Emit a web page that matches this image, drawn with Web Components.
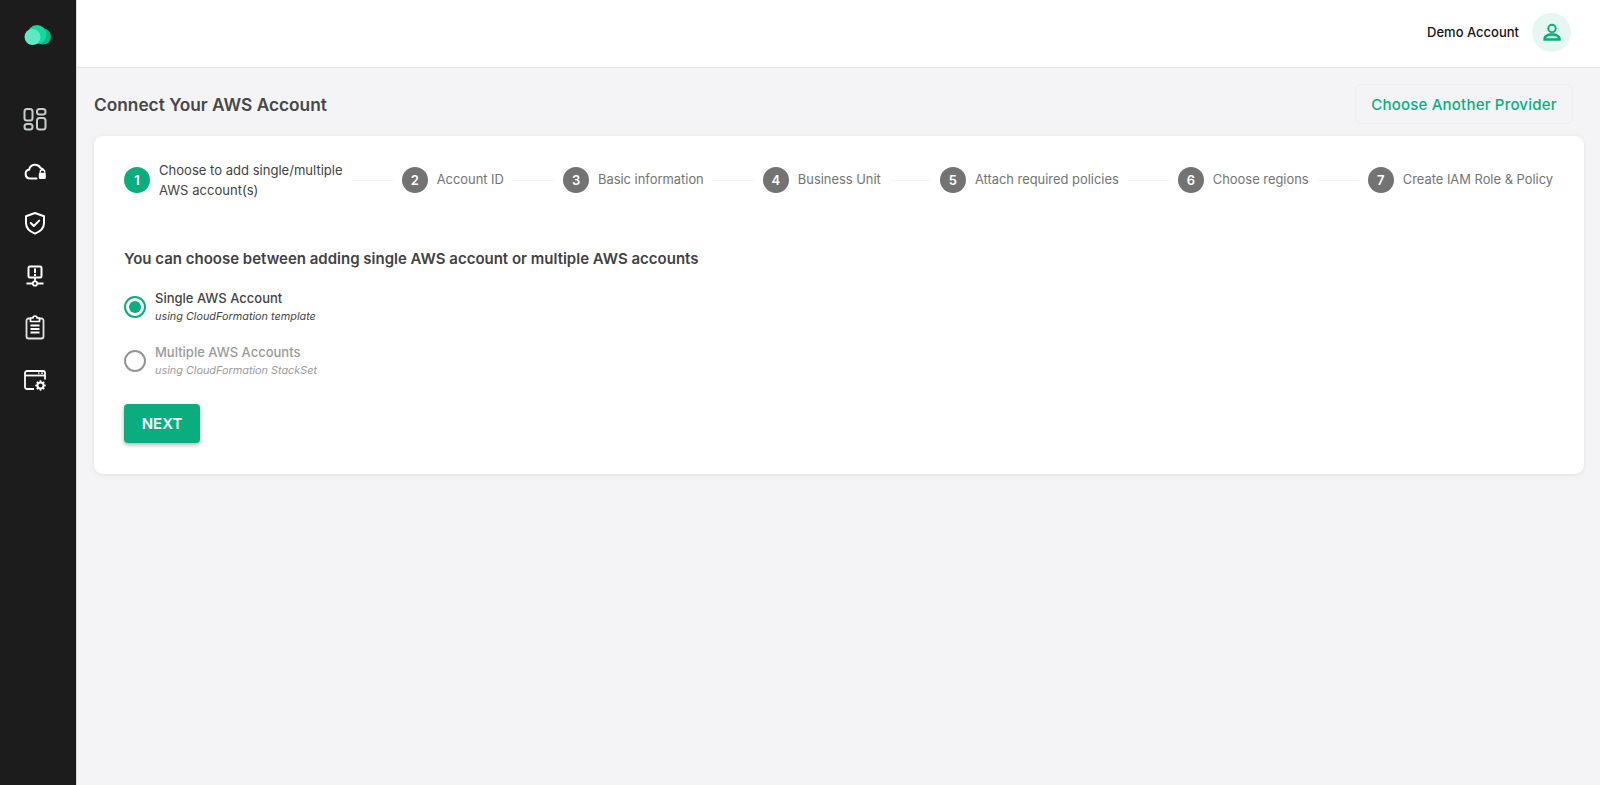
<!DOCTYPE html>
<html>
<head>
<meta charset="utf-8">
<title>Connect AWS Account</title>
<style>
    html, body { margin: 0; height: 100%; }
    body { font-family: Inter, "Liberation Sans", sans-serif; background: #f4f4f6; }
</style>
</head>
<body>
<app-shell>
    <side-nav slot="side"></side-nav>
    <top-bar slot="top" name="Demo Account"></top-bar>
    <page-head title="Connect Your AWS Account" action="Choose Another Provider"></page-head>
    <wizard-card>
        <wizard-steps>
            <wizard-step num="1" active>Choose to add single/multiple<br>AWS account(s)</wizard-step>
            <wizard-step num="2">Account ID</wizard-step>
            <wizard-step num="3">Basic information</wizard-step>
            <wizard-step num="4">Business Unit</wizard-step>
            <wizard-step num="5">Attach required policies</wizard-step>
            <wizard-step num="6">Choose regions</wizard-step>
            <wizard-step num="7">Create IAM Role &amp; Policy</wizard-step>
        </wizard-steps>
        <h3 class="q" slot="question">You can choose between adding single AWS account or multiple AWS accounts</h3>
        <radio-option slot="options" checked label="Single AWS Account" hint="using CloudFormation template"></radio-option>
        <radio-option slot="options" label="Multiple AWS Accounts" hint="using CloudFormation StackSet"></radio-option>
        <next-button slot="actions">NEXT</next-button>
    </wizard-card>
</app-shell>

<script>
'use strict';

function define(name, html) {
    const template = document.createElement('template');
    template.innerHTML = html;
    customElements.define(name, class extends HTMLElement {
        constructor() {
            super();
            this.attachShadow({ mode: 'open' });
            this.shadowRoot.appendChild(template.content.cloneNode(true));
        }
        connectedCallback() {
            this.shadowRoot.querySelectorAll('[data-attr]').forEach(el => {
                el.textContent = this.getAttribute(el.dataset.attr);
            });
        }
    });
}

define('app-shell', `
    <style>
        :host { display: flex; min-height: 785px; height: 100vh; }
        .main { flex: 1; min-width: 0; display: flex; flex-direction: column; }
        .content { padding: 16px 16px 0 17px; }
    </style>
    <slot name="side"></slot>
    <div class="main">
        <slot name="top"></slot>
        <div class="content"><slot></slot></div>
    </div>
`);

define('side-nav', `
    <style>
        :host { display: flex; flex-direction: column; width: 77px; flex: none; background: #1c1c1c; border-right: 1px solid #d8d8d8; box-sizing: border-box; padding: 23px 0 0 23px; }
        .logo { display: block; }
        nav { display: flex; flex-direction: column; gap: 28px; margin-top: 60px; }
        nav svg { display: block; width: 24px; height: 24px; overflow: visible; }
    </style>
    <svg class="logo" width="30" height="24" viewBox="0 0 30 24">
        <circle cx="20" cy="13.500" r="8" fill="#08b986"/>
        <circle cx="14" cy="11.500" r="9.500" fill="#12d99f"/>
        <circle cx="9.500" cy="14" r="8" fill="#5fe8c4"/>
    </svg>
    <nav>
        <!-- dashboard tiles -->
        <svg viewBox="0 0 24 24"><g fill="none" stroke="#c5cdc9" stroke-width="2"><rect x="1.500" y="2" width="8" height="11.500" rx="2.500"/><rect x="14" y="2" width="8.500" height="5.500" rx="2.500"/><rect x="1.500" y="17" width="8" height="5.500" rx="2.500"/><rect x="14" y="11" width="8.500" height="11.500" rx="2.500"/></g></svg>
        <!-- cloud with lock -->
        <svg viewBox="0 0 24 24"><path d="M13.500 19.500H7a4.500 4.500 0 0 1-.8-8.900 6 6 0 0 1 11.200-1.700 5 5 0 0 1 2.600 1.600" fill="none" stroke="#fff" stroke-width="2" stroke-linecap="round"/><path d="M17.200 13.800v-.8a2.300 2.300 0 0 1 4.600 0v.8" fill="none" stroke="#fff" stroke-width="1.400"/><rect x="15.800" y="13.800" width="7" height="6.200" rx="1.200" fill="#fff"/></svg>
        <!-- shield with check -->
        <svg viewBox="0 0 24 24"><path d="M12 2 21 5.200V12c0 5.200-3.800 8.600-9 10.600C6.800 20.600 3 17.200 3 12V5.200z" fill="none" stroke="#fff" stroke-width="2" stroke-linejoin="round"/><path d="m7.800 12 3 3 5.400-5.400" fill="none" stroke="#fff" stroke-width="2" stroke-linecap="round" stroke-linejoin="round"/></svg>
        <!-- monitor on a network line -->
        <svg viewBox="0 0 24 24"><rect x="5.500" y="3.500" width="13" height="11" rx="1.500" fill="none" stroke="#fff" stroke-width="2"/><path d="M12 5.500v4.500M12 11v2" stroke="#fff" stroke-width="2"/><path d="M12 14.500v4M3.500 20.500h6M14.500 20.500h6" stroke="#fff" stroke-width="1.800"/><circle cx="12" cy="20.500" r="2.200" fill="none" stroke="#fff" stroke-width="1.800"/></svg>
        <!-- clipboard -->
        <svg viewBox="0 0 24 24"><path d="M8 3.500H5.500A2 2 0 0 0 3.500 5.500v16a2 2 0 0 0 2 2h13a2 2 0 0 0 2-2v-16a2 2 0 0 0-2-2H16" fill="none" stroke="#e4e4e4" stroke-width="1.800"/><path d="M7.500 6.500V3H10a2 2 0 0 1 4 0h2.500v3.500z" fill="none" stroke="#fff" stroke-width="1.700" stroke-linejoin="round"/><path d="M7.500 10.500h9M7.500 14h9M7.500 17.500h9" stroke="#fff" stroke-width="1.800"/></svg>
        <!-- window with gear -->
        <svg viewBox="0 0 24 24"><path d="M11 22H4a2 2 0 0 1-2-2V6a2 2 0 0 1 2-2h16a2 2 0 0 1 2 2v6.500" fill="none" stroke="#fff" stroke-width="1.800"/><path d="M2 8.500h20" stroke="#fff" stroke-width="1.800"/><path d="M15 6.200h1.500M18 6.200h2" stroke="#fff" stroke-width="1.300"/><circle cx="17.500" cy="18.500" r="3.100" fill="none" stroke="#fff" stroke-width="2"/><path d="M17.500 13.200v2M17.500 21.800v2M12.200 18.500h2M20.800 18.500h2M13.800 14.800l1.400 1.400M19.800 20.800l1.400 1.400M13.800 22.200l1.400-1.400M19.800 16.200l1.400-1.400" stroke="#fff" stroke-width="1.700"/></svg>
    </nav>
`);

define('top-bar', `
    <style>
        :host { display: flex; align-items: center; justify-content: flex-end; gap: 13px; height: 68px; padding-right: 29px; background: #fff; border-bottom: 1px solid #e2e3e5; box-sizing: border-box; font-size: 13px; font-weight: 500; color: #151515; flex: none; }
        .avatar { width: 39px; height: 39px; border-radius: 50%; background: #e6f7f1; display: flex; align-items: center; justify-content: center; margin-top: -3px; }
        span { margin-top: -3px; }
    </style>
    <span data-attr="name"></span>
    <div class="avatar">
        <svg width="22" height="22" viewBox="0 0 22 22"><circle cx="11" cy="7.500" r="3.700" fill="none" stroke="#0aae7e" stroke-width="2"/><path d="M2.300 19.700v-1.700c0-3.700 4-5.700 8.700-5.700s8.700 2 8.700 5.700v1.700z" fill="#0aae7e"/><path d="M5 17.200c.8-1.700 3.200-2.400 6-2.400s5.200.7 6 2.400z" fill="#bfeadb"/></svg>
    </div>
`);

define('page-head', `
    <style>
        :host { display: flex; align-items: center; justify-content: space-between; margin-bottom: 12px; color: #444; }
        h1 { margin: 0; font-size: 17.300px; font-weight: 600; color: #474747; }
        button { font: 500 15px Inter, "Liberation Sans", sans-serif; letter-spacing: .2px; color: #0aae7e; background: transparent; border: 1px solid #eeeef0; border-radius: 6px; height: 40px; width: 218px; padding: 0; margin-right: 11px; }
    </style>
    <h1 data-attr="title"></h1>
    <button data-attr="action"></button>
`);

define('wizard-card', `
    <style>
        :host { display: block; background: #fff; border-radius: 9px; box-shadow: 0 1px 5px rgba(0,0,0,.08); padding: 24px 31px 30px 30px; height: 338px; box-sizing: border-box; }
        .q { margin: 49px 0 21px; }
        ::slotted(h3) { margin: 0; font-size: 15px; font-weight: 600; color: #424242; }
        .opts { display: flex; flex-direction: column; gap: 17px; margin-bottom: 24px; }
    </style>
    <slot></slot>
    <div class="q"><slot name="question"></slot></div>
    <div class="opts"><slot name="options"></slot></div>
    <slot name="actions"></slot>
`);

define('wizard-steps', `
    <style>
        :host { display: flex; align-items: center; height: 40px; }
        ::slotted(wizard-step:not(:last-child)) { flex: 1 1 auto; }
    </style>
    <slot></slot>
`);

define('wizard-step', `
    <style>
        :host { display: flex; align-items: center; font-size: 12.900px; line-height: 20px; color: #747474; white-space: nowrap; }
        :host([active]) { color: #444; font-size: 13.050px; }
        .num { flex: none; width: 26px; height: 26px; border-radius: 50%; background: #737373; color: #fff; display: flex; align-items: center; justify-content: center; font-weight: 600; font-size: 13px; margin-right: 9px; }
        :host([active]) .num { background: #0aae7e; }
        .line { flex: 1; height: 1px; background: #f3f3f3; margin: 0 9px; min-width: 20px; }
        :host(:last-child) .line { display: none; }
    </style>
    <span class="num" data-attr="num"></span>
    <span><slot></slot></span>
    <span class="line"></span>
`);

define('radio-option', `
    <style>
        :host { display: flex; align-items: center; gap: 9px; color: #9b9b9b; }
        :host([checked]) { color: #444; }
        .ring { flex: none; width: 22px; height: 22px; box-sizing: border-box; border-radius: 50%; border: 2px solid #959595; display: flex; align-items: center; justify-content: center; margin-top: -2px; }
        :host([checked]) .ring { border-color: #0aae7e; }
        :host([checked]) .ring::after { content: ""; width: 12px; height: 12px; border-radius: 50%; background: #0aae7e; }
        .label { font-size: 13px; line-height: 18px; font-weight: 500; }
        .hint { font-size: 10.850px; line-height: 19px; font-style: italic; }
    </style>
    <span class="ring"></span>
    <div>
        <div class="label" data-attr="label"></div>
        <div class="hint" data-attr="hint"></div>
    </div>
`);

define('next-button', `
    <style>
        :host { display: inline-block; }
        button { display: block; width: 76px; height: 39px; border: 0; border-radius: 4px; background: #0aae7e; color: #fff; font: 600 15px Inter, "Liberation Sans", sans-serif; box-shadow: 0 2px 4px rgba(0,0,0,.3); padding: 0; }
    </style>
    <button><slot></slot></button>
`);
</script>
</body>
</html>
